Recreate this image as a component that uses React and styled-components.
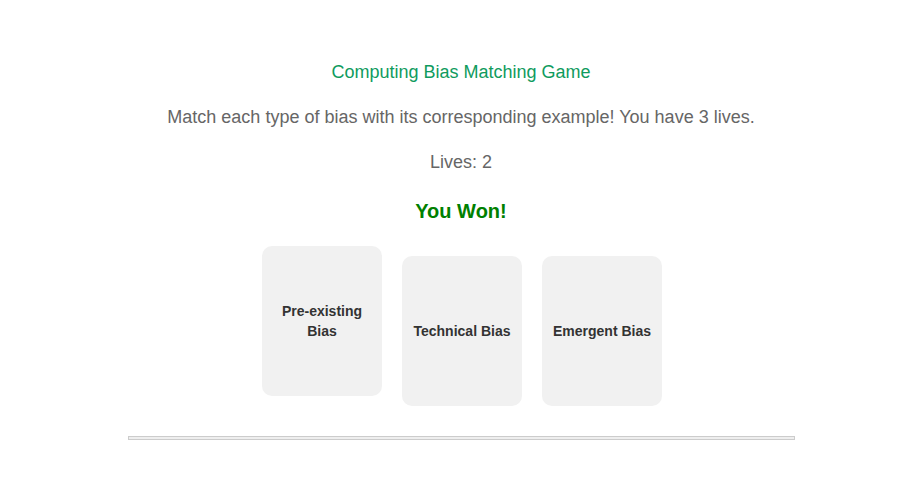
import React, { useState } from 'react';
import styled, { createGlobalStyle } from 'styled-components';

const GlobalStyle = createGlobalStyle`
  body {
    margin: 0;
    background: #fff;
    font-family: "Liberation Sans", Arial, sans-serif;
  }
`;

const Page = styled.div`
  max-width: 667px;
  margin: 0 auto;
  padding: 59px 0 40px;
  text-align: center;
`;

const Title = styled.h1`
  margin: 0 0 18px;
  font-size: 18px;
  font-weight: normal;
  line-height: 1.5;
  color: #0f9b5e;
`;

const Text = styled.p`
  margin: 18px 0;
  font-size: 18px;
  line-height: 1.5;
  color: #666;
`;

const Status = styled.h2`
  margin: 20px 0;
  font-size: 20px;
  line-height: 1.5;
  font-weight: bold;
  color: #008000;
`;

const CardRow = styled.div`
  display: flex;
  justify-content: center;
  align-items: last baseline;
  gap: 20px;
  margin-top: 20px;
  padding-left: 2px;
`;

const Card = styled.div`
  display: inline-flex;
  align-items: center;
  justify-content: center;
  box-sizing: border-box;
  width: 120px;
  height: 150px;
  padding: 10px;
  border-radius: 10px;
  background: #f1f1f1;
  color: #333;
  font-size: 14px;
  font-weight: bold;
  line-height: 20px;
  cursor: pointer;
`;

const CardText = styled.span`
  display: block;
`;

const MatchTrack = styled.div`
  height: 2px;
  margin-top: 30px;
  border: 1px solid #ccc;
  background: #eee;
`;

export default function App() {
  const [lives] = useState(2);
  const [cards] = useState([
    { id: 1, label: 'Pre-existing Bias' },
    { id: 2, label: 'Technical Bias' },
    { id: 3, label: 'Emergent Bias' },
  ]);

  return (
    <>
      <GlobalStyle />
      <Page>
        <Title>Computing Bias Matching Game</Title>
        <Text>Match each type of bias with its corresponding example! You have 3 lives.</Text>
        <Text>Lives: {lives}</Text>
        <Status>You Won!</Status>
        <CardRow>
          {cards.map((card) => (
            <Card key={card.id}>
              <CardText>{card.label}</CardText>
            </Card>
          ))}
        </CardRow>
        <MatchTrack />
      </Page>
    </>
  );
}
